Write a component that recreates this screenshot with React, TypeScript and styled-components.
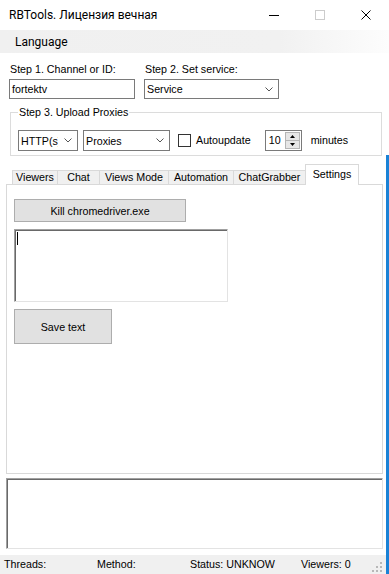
import React from "react";
import styled, { createGlobalStyle, css } from "styled-components";

const GlobalStyle = createGlobalStyle`
  html, body { margin: 0; padding: 0; background: #ffffff; }
  body { font-family: "Liberation Sans", Arial, sans-serif; font-size: 10.7px; color: #000; }
  * { box-sizing: border-box; }
`;

const Window = styled.div`
  position: relative;
  width: 389px;
  height: 574px;
  display: flex;
  flex-direction: column;
  background: #ffffff;
  overflow: hidden;
  &::after {
    content: "";
    position: absolute;
    right: 0;
    top: 155px;
    bottom: 0;
    width: 3px;
    background: #1a82d6;
  }
`;

const TitleBar = styled.div`
  height: 30px;
  display: flex;
  align-items: center;
  padding-left: 9px;
  font-family: Roboto, "Noto Sans", sans-serif;
  font-size: 12px;
`;

const TitleText = styled.div`
  flex: 1;
`;

const CaptionButton = styled.div`
  width: 46px;
  height: 30px;
  display: flex;
  align-items: center;
  justify-content: center;
`;

const MenuBar = styled.div`
  height: 23px;
  display: flex;
  align-items: center;
  padding-left: 15px;
  background: linear-gradient(to right, #f0f0f0 0%, #f1f1f1 72%, #fdfdfd 100%);
  font-family: Roboto, "Noto Sans", sans-serif;
  font-size: 12px;
`;

const Content = styled.div`
  flex: 1;
  display: flex;
  flex-direction: column;
`;

const StepsRow = styled.div`
  display: flex;
  gap: 9px;
  margin-top: 10px;
  padding-left: 9px;
`;

const Field = styled.div<{ $w: number }>`
  width: ${(p) => p.$w}px;
  display: flex;
  flex-direction: column;
`;

const Label = styled.div`
  height: 13px;
  line-height: 13px;
  margin-bottom: 3px;
  padding-left: 1px;
  white-space: nowrap;
`;

const TextBox = styled.div`
  height: 20px;
  border: 1px solid #7a7a7a;
  padding-left: 2px;
  line-height: 18px;
  background: #fff;
`;

const ComboBox = styled.div<{ $w?: number; $h: number }>`
  ${(p) => p.$w !== undefined && css`width: ${p.$w}px;`}
  height: ${(p) => p.$h}px;
  border: 1px solid #7a7a7a;
  background: #fff;
  display: flex;
  align-items: center;
  padding: 0 5px 0 2px;
  flex-shrink: 0;
`;

const ComboText = styled.span<{ $clip?: number }>`
  flex: 1;
  white-space: nowrap;
  overflow: hidden;
  ${(p) => p.$clip !== undefined && css`max-width: ${p.$clip}px; flex: 0 0 ${p.$clip}px;`}
`;

const ArrowWrap = styled.span`
  margin-left: auto;
  display: flex;
  align-items: center;
`;

const GroupBox = styled.div`
  position: relative;
  margin: 13px 0 0 10px;
  width: 372px;
  height: 44px;
  border: 1px solid #dcdcdc;
  padding: 17px 0 0 7px;
`;

const Legend = styled.span`
  position: absolute;
  top: -7px;
  left: 7px;
  padding: 0 1px;
  line-height: 13px;
  background: #fff;
`;

const GroupRow = styled.div`
  display: flex;
  align-items: center;
  height: 21px;
`;

const Spacer = styled.span<{ $w: number }>`
  width: ${(p) => p.$w}px;
  flex-shrink: 0;
`;

const CheckBox = styled.span`
  width: 13px;
  height: 13px;
  border: 1px solid #333;
  background: #fff;
  flex-shrink: 0;
`;

const Numeric = styled.div`
  width: 37px;
  height: 21px;
  border: 1px solid #7a7a7a;
  display: flex;
  align-items: stretch;
  padding: 1px;
  flex-shrink: 0;
`;

const NumText = styled.span`
  flex: 1;
  padding-left: 2px;
  line-height: 17px;
`;

const Spin = styled.div`
  width: 15px;
  display: flex;
  flex-direction: column;
`;

const SpinBtn = styled.div`
  flex: 1;
  background: #e6e6e6;
  border: 1px solid #b5b5b5;
  display: flex;
  align-items: center;
  justify-content: center;
  & + & { border-top: none; }
`;

const Tabs = styled.div`
  display: flex;
  flex-direction: column;
`;

const TabStrip = styled.div`
  margin-top: 8px;
  height: 20px;
  display: flex;
  align-items: flex-end;
  padding-left: 12px;
  position: relative;
  z-index: 1;
`;

const Tab = styled.div<{ $w: number; $active?: boolean }>`
  width: ${(p) => p.$w}px;
  height: 14px;
  margin-left: -1px;
  border: 1px solid #d9d9d9;
  border-bottom: none;
  background: #f0f0f0;
  display: flex;
  align-items: center;
  justify-content: center;
  white-space: nowrap;
  line-height: 13px;
  &:first-child { margin-left: 0; }
  ${(p) =>
    p.$active &&
    css`
      height: 21px;
      margin-bottom: -1px;
      background: #ffffff;
      align-items: flex-start;
      padding-top: 3px;
    `}
`;

const TabPanel = styled.div`
  margin-left: 6px;
  width: 377px;
  height: 290px;
  border: 1px solid #d9d9d9;
  background: #fff;
  padding: 14px 0 0 7px;
  display: flex;
  flex-direction: column;
  align-items: flex-start;
  gap: 7px;
`;

const Button = styled.div<{ $w: number; $h: number }>`
  width: ${(p) => p.$w}px;
  height: ${(p) => p.$h}px;
  background: #e1e1e1;
  border: 1px solid #adadad;
  display: flex;
  align-items: center;
  justify-content: center;
  flex-shrink: 0;
`;

const Memo = styled.div<{ $w: number; $h: number }>`
  width: ${(p) => p.$w}px;
  height: ${(p) => p.$h}px;
  flex-shrink: 0;
  background: #fff;
  border-top: 1px solid #a0a0a0;
  border-left: 1px solid #a0a0a0;
  border-right: 1px solid #e3e3e3;
  border-bottom: 1px solid #e3e3e3;
  box-shadow: inset 1px 1px 0 #696969;
`;

const Caret = styled.span`
  display: block;
  width: 1px;
  height: 13px;
  margin: 2px 0 0 2px;
  background: #000;
`;

const LogBox = styled(Memo)`
  margin: 4px 0 0 6px;
`;

const StatusBar = styled.div`
  margin-top: 6px;
  height: 19px;
  width: 386px;
  background: #f0f0f0;
  display: grid;
  grid-template-columns: 93px 93px 111px 1fr 14px;
  align-items: center;
  padding-left: 4px;
  position: relative;
`;

const StatusText = styled.span`
  white-space: nowrap;
  line-height: 13px;
`;

const Grip = styled.span`
  align-self: end;
  display: flex;
  margin-bottom: 2px;
`;

const Chevron = () => (
  <svg width="8" height="5" viewBox="0 0 8 5">
    <polyline points="0.5,0.5 4,4 7.5,0.5" fill="none" stroke="#555" strokeWidth="1" />
  </svg>
);

export default function App() {
  return (
    <>
      <GlobalStyle />
      <Window>
        <TitleBar>
          <TitleText>RBTools. Лицензия вечная</TitleText>
          <CaptionButton>
            <svg width="10" height="10" viewBox="0 0 10 10">
              <line x1="0" y1="5.5" x2="10" y2="5.5" stroke="#000" strokeWidth="1" />
            </svg>
          </CaptionButton>
          <CaptionButton>
            <svg width="10" height="10" viewBox="0 0 10 10">
              <rect x="0.5" y="0.5" width="9" height="9" fill="none" stroke="#cccccc" strokeWidth="1" />
            </svg>
          </CaptionButton>
          <CaptionButton>
            <svg width="10" height="10" viewBox="0 0 10 10">
              <path d="M0.5 0.5 L9.5 9.5 M9.5 0.5 L0.5 9.5" stroke="#000" strokeWidth="1" />
            </svg>
          </CaptionButton>
        </TitleBar>
        <MenuBar>Language</MenuBar>
        <Content>
          <StepsRow>
            <Field $w={126}>
              <Label>Step 1. Channel or ID:</Label>
              <TextBox>fortektv</TextBox>
            </Field>
            <Field $w={135}>
              <Label>Step 2. Set service:</Label>
              <ComboBox $h={20}>
                <ComboText>Service</ComboText>
                <ArrowWrap>
                  <Chevron />
                </ArrowWrap>
              </ComboBox>
            </Field>
          </StepsRow>
          <GroupBox>
            <Legend>Step 3. Upload Proxies</Legend>
            <GroupRow>
              <ComboBox $w={60} $h={21}>
                <ComboText $clip={37}>HTTP(s)</ComboText>
                <ArrowWrap>
                  <Chevron />
                </ArrowWrap>
              </ComboBox>
              <Spacer $w={5} />
              <ComboBox $w={87} $h={21}>
                <ComboText>Proxies</ComboText>
                <ArrowWrap>
                  <Chevron />
                </ArrowWrap>
              </ComboBox>
              <Spacer $w={8} />
              <CheckBox />
              <Spacer $w={5} />
              <StatusText>Autoupdate</StatusText>
              <Spacer $w={14} />
              <Numeric>
                <NumText>10</NumText>
                <Spin>
                  <SpinBtn>
                    <svg width="5" height="3" viewBox="0 0 5 3">
                      <polygon points="0,3 2.5,0 5,3" fill="#000" />
                    </svg>
                  </SpinBtn>
                  <SpinBtn>
                    <svg width="5" height="3" viewBox="0 0 5 3">
                      <polygon points="0,0 2.5,3 5,0" fill="#000" />
                    </svg>
                  </SpinBtn>
                </Spin>
              </Numeric>
              <Spacer $w={9} />
              <StatusText>minutes</StatusText>
            </GroupRow>
          </GroupBox>
          <Tabs>
            <TabStrip>
              <Tab $w={46}>Viewers</Tab>
              <Tab $w={43}>Chat</Tab>
              <Tab $w={70}>Views Mode</Tab>
              <Tab $w={66}>Automation</Tab>
              <Tab $w={73}>ChatGrabber</Tab>
              <Tab $w={54} $active>
                Settings
              </Tab>
            </TabStrip>
            <TabPanel>
              <Button $w={172} $h={23}>Kill chromedriver.exe</Button>
              <Memo $w={214} $h={73}>
                <Caret />
              </Memo>
              <Button $w={98} $h={35}>Save text</Button>
            </TabPanel>
          </Tabs>
          <LogBox $w={377} $h={71} />
          <StatusBar>
            <StatusText>Threads:</StatusText>
            <StatusText>Method:</StatusText>
            <StatusText>Status: UNKNOW</StatusText>
            <StatusText>Viewers: 0</StatusText>
            <Grip>
              <svg width="10" height="10" viewBox="0 0 10 10">
                <rect x="8" y="0" width="2" height="2" fill="#b8b8b8" />
                <rect x="4" y="4" width="2" height="2" fill="#b8b8b8" />
                <rect x="8" y="4" width="2" height="2" fill="#b8b8b8" />
                <rect x="0" y="8" width="2" height="2" fill="#b8b8b8" />
                <rect x="4" y="8" width="2" height="2" fill="#b8b8b8" />
                <rect x="8" y="8" width="2" height="2" fill="#b8b8b8" />
              </svg>
            </Grip>
          </StatusBar>
        </Content>
      </Window>
    </>
  );
}
